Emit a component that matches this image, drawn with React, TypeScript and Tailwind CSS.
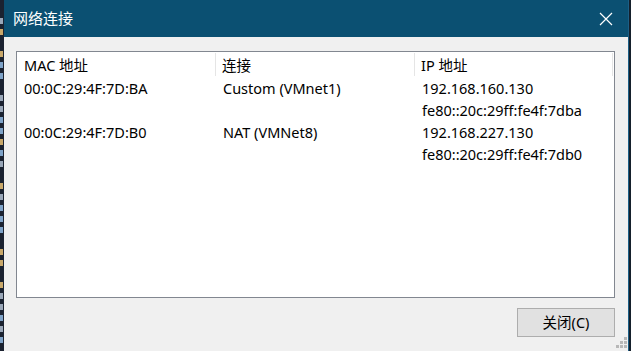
import React from 'react';

const rows = [
  { mac: '00:0C:29:4F:7D:BA', conn: 'Custom (VMnet1)', ip: ['192.168.160.130', 'fe80::20c:29ff:fe4f:7dba'] },
  { mac: '00:0C:29:4F:7D:B0', conn: 'NAT (VMNet8)', ip: ['192.168.227.130', 'fe80::20c:29ff:fe4f:7db0'] },
];

// colours of the terminal glyph fragments peeking out on the left
const terminalBits = ['', '#9aa7b8', '#c9a86a', '', '#c9a86a', '#7fa3c8', '#7fa3c8', '', '#9aa7b8', '#9aa7b8', '#7fa3c8', '#7fa3c8', '#c9a86a', '#7fa3c8', '#9aa7b8', '', '#c9a86a', '#9aa7b8', '#7fa3c8', '#7fa3c8', '#7fa3c8', '', '#c9a86a', '#c9a86a', '', '#c9a86a', '#9aa7b8', '#9aa7b8', '#7fa3c8', '#9aa7b8', '#7fa3c8'];

export default function App() {
  return (
    <div
      className="w-[631px] h-[351px] flex bg-[#1b2230] overflow-hidden"
      style={{ fontFamily: '"Noto Sans", "Noto Sans CJK SC", sans-serif' }}
    >
      {/* background terminal sliver */}
      <div className="w-[4px] flex flex-col pt-[4px] overflow-hidden">
        {terminalBits.map((c, i) => (
          <div key={i} className="h-[11px] flex items-center">
            {c && <div className="w-[3px] h-[6px]" style={{ backgroundColor: c }} />}
          </div>
        ))}
      </div>

      {/* dialog */}
      <div className="w-[625px] flex flex-col border-r border-[#1c5f86]">
        {/* Title bar */}
        <div className="h-[37px] bg-[#0b5072] flex items-center justify-between pl-[9px] pr-[15px]">
          <span className="text-white text-[15px]">网络连接</span>
          <svg width="14" height="14" viewBox="0 0 14 14">
            <path d="M1 1 L13 13 M13 1 L1 13" stroke="#ffffff" strokeWidth="1.2" />
          </svg>
        </div>

        {/* Client area */}
        <div className="flex-1 bg-[#f0f0f0] flex flex-col pl-[12px] pr-[13px] pt-[14px] relative">
          <div className="h-[247px] border border-[#828790] bg-white text-[14.5px] text-black leading-[22px]">
            <div className="grid grid-cols-[199px_199px_198px] h-[25px] items-center">
              <div className="h-[23px] flex items-center pl-[7px] border-r border-[#e5e5e5]">MAC 地址</div>
              <div className="h-[23px] flex items-center pl-[6px] border-r border-[#e5e5e5]">连接</div>
              <div className="h-[23px] flex items-center pl-[6px] border-r border-[#e5e5e5]">IP 地址</div>
            </div>
            {rows.map((r) => (
              <div key={r.mac} className="grid grid-cols-[199px_199px_198px]">
                <div className="pl-[7px]">{r.mac}</div>
                <div className="pl-[7px]">{r.conn}</div>
                <div className="pl-[7px] flex flex-col">
                  {r.ip.map((a) => (
                    <span key={a}>{a}</span>
                  ))}
                </div>
              </div>
            ))}
          </div>

          <div className="flex justify-end mt-[10px]">
            <button className="w-[98px] h-[29px] bg-[#e1e1e1] border border-[#adadad] text-[14.5px] text-black flex items-center justify-center">
              关闭(C)
            </button>
          </div>

          {/* size grip */}
          <svg className="absolute right-[1px] bottom-[3px]" width="11" height="11" viewBox="0 0 11 11">
            <rect x="8" y="0" width="3" height="3" fill="#b8b8b8" />
            <rect x="4" y="4" width="3" height="3" fill="#b8b8b8" />
            <rect x="8" y="4" width="3" height="3" fill="#b8b8b8" />
            <rect x="0" y="8" width="3" height="3" fill="#b8b8b8" />
            <rect x="4" y="8" width="3" height="3" fill="#b8b8b8" />
            <rect x="8" y="8" width="3" height="3" fill="#b8b8b8" />
          </svg>
        </div>
      </div>
      <div className="w-[2px] bg-[#15202c]" />
    </div>
  );
}
